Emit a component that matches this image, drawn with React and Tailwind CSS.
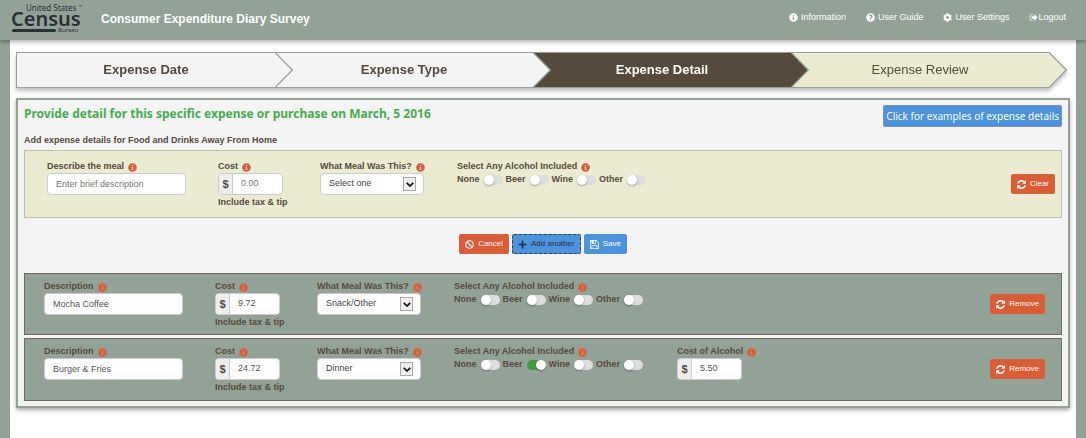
import React, { useState } from 'react'
import { FaInfoCircle, FaQuestionCircle, FaCog, FaBan, FaPlus } from 'react-icons/fa'

const SignOutIcon = ({ className }) => (
  <svg className={className} viewBox="0 0 1664 1792" fill="currentColor" aria-hidden="true">
    <path d="M704 1440q0 4 1 20t.5 26.5-3 23.5-10 19.5-20.5 6.5h-320q-119 0-203.5-84.5t-84.5-203.5v-704q0-119 84.5-203.5t203.5-84.5h320q13 0 22.5 9.5t9.5 22.5q0 4 1 20t.5 26.5-3 23.5-10 19.5-20.5 6.5h-320q-66 0-113 47t-47 113v704q0 66 47 113t113 47h312l11.5 1 11.5 3 8 5.5 7 9 2 13.5zm928-544q0 26-19 45l-544 544q-19 19-45 19t-45-19-19-45v-288h-448q-26 0-45-19t-19-45v-384q0-26 19-45t45-19h448v-288q0-26 19-45t45-19 45 19l544 544q19 19 19 45z" />
  </svg>
)

const RefreshIcon = ({ className }) => (
  <svg className={className} viewBox="0 128 1536 1536" fill="currentColor" aria-hidden="true">
    <path d="M1511 1056q0 5-1 7-64 268-268 434.5t-478 166.5q-146 0-282.5-55t-243.5-157l-129 129q-19 19-45 19t-45-19-19-45v-448q0-26 19-45t45-19h448q26 0 45 19t19 45-19 45l-137 137q71 66 161 102t187 36q134 0 250-65t186-179q11-17 53-117 8-23 30-23h192q13 0 22.5 9.5t9.5 22.5zm25-800v448q0 26-19 45t-45 19h-448q-26 0-45-19t-19-45 19-45l138-138q-148-137-349-137-134 0-250 65t-186 179q-11 17-53 117-8 23-30 23h-199q-13 0-22.5-9.5t-9.5-22.5v-7q65-268 270-434.5t480-166.5q146 0 284 55.5t245 156.5l130-129q19-19 45-19t45 19 19 45z" />
  </svg>
)

const SaveIcon = ({ className }) => (
  <svg className={className} viewBox="128 128 1536 1536" fill="currentColor" aria-hidden="true">
    <path d="M512 1536h768v-384h-768v384zm896 0h128v-896q0-14-10-38.5t-20-34.5l-281-281q-10-10-34-20t-39-10v416q0 40-28 68t-68 28h-576q-40 0-68-28t-28-68v-416h-128v1280h128v-416q0-40 28-68t68-28h832q40 0 68 28t28 68v416zm-384-928v-320q0-13-9.5-22.5t-22.5-9.5h-192q-13 0-22.5 9.5t-9.5 22.5v320q0 13 9.5 22.5t22.5 9.5h192q13 0 22.5-9.5t9.5-22.5zm640 32v928q0 40-28 68t-68 28h-1344q-40 0-68-28t-28-68v-1344q0-40 28-68t68-28h928q40 0 88 20t76 48l280 280q28 28 48 76t20 88z" />
  </svg>
)

const Logo = () => (
  <svg className="h-9 w-20 shrink-0" viewBox="0 0 80 36" fill="#2b3038" role="img" aria-label="United States Census Bureau">
    <text x="16" y="11" fontSize="8" fontFamily="'Noto Sans', sans-serif">United States</text>
    <text x="69" y="8" fontSize="4" fontFamily="'Noto Sans', sans-serif">™</text>
    <text x="1" y="26" fontSize="20" fontWeight="600" fontFamily="'Noto Sans', sans-serif">Census</text>
    <rect x="2" y="29" width="44" height="3" rx="1.5" />
    <text x="48" y="32" fontSize="6" fontFamily="'Noto Sans', sans-serif">Bureau</text>
  </svg>
)

const STEPS = [
  { label: 'Expense Date', box: 'bg-[#f4f4f4] text-[#564a3c] font-bold', fill: '#f4f4f4' },
  { label: 'Expense Type', box: 'bg-[#f4f4f4] text-[#564a3c] font-bold', fill: '#f4f4f4' },
  { label: 'Expense Detail', box: 'bg-[#564a3c] text-white font-bold', fill: '#564a3c', current: true },
  { label: 'Expense Review', box: 'bg-[#ebebd2] text-[#564a3c]', fill: '#ebebd2' },
]

const Steps = () => (
  <nav className="mr-[3px] flex pr-[18px] drop-shadow-[0_3px_2px_rgba(0,0,0,0.25)]">
    {STEPS.map((step, idx) => (
      <button
        key={step.label}
        aria-current={step.current ? 'step' : undefined}
        className={`relative h-9 flex-1 border-y border-[#93a297] text-[13px] ${idx === 0 ? 'border-l' : ''} ${step.box}`}
      >
        {step.label}
        <svg className="absolute -top-px left-full z-10 h-9 w-[18px]" viewBox="0 0 18 36" aria-hidden="true">
          <path d="M0 .5L17.3 18L0 35.5" fill={step.fill} stroke="#93a297" strokeWidth="1.2" />
        </svg>
      </button>
    ))}
  </nav>
)

const Info = () => <FaInfoCircle className="size-[9px] text-[#dc5c36]" />

const Label = ({ htmlFor, children }) => (
  <label htmlFor={htmlFor} className="flex h-3 items-center gap-1 whitespace-nowrap font-bold">
    {children} <Info />
  </label>
)

const MoneyInput = ({ id, value, placeholder }) => (
  <div className="flex h-[22px] w-[65px] overflow-hidden rounded-sm border border-[#ccc] bg-white">
    <span className="flex w-[14px] shrink-0 items-center justify-center border-r border-[#ccc] bg-[#eee] text-[11px] font-bold">$</span>
    <input id={id} defaultValue={value} placeholder={placeholder} className="w-full min-w-0 px-2 text-[9px] text-[#555] outline-none placeholder:text-[#777]" />
  </div>
)

const Toggle = ({ label, checked }) => {
  const [on, setOn] = useState(checked)
  return (
    <label className="flex items-center gap-1">
      {label}
      <input type="checkbox" role="switch" checked={on} onChange={() => setOn(!on)} className="peer sr-only" />
      <span className={`flex h-[10px] w-[19px] rounded-full ${on ? 'justify-end bg-[#43993f]' : 'bg-[#ddd]'}`}>
        <span className="size-[10px] rounded-full bg-white shadow-[0_1px_2px_rgba(0,0,0,0.3)]" />
      </span>
    </label>
  )
}

const SmallButton = ({ className, children }) => (
  <button className={`flex h-5 items-center gap-1 rounded-xs border px-[5px] text-[8px] leading-none ${className}`}>
    {children}
  </button>
)

const ExpenseRow = ({ id, descLabel, desc, cost, meal, beer, alcoholCost, action, className }) => (
  <section className={`flex items-start border text-[9px] ${className}`}>
    <div className="w-[171px] shrink-0">
      <Label htmlFor={`${id}-desc`}>{descLabel}</Label>
      <input
        id={`${id}-desc`}
        defaultValue={desc}
        placeholder="Enter brief description"
        className="h-[22px] w-[139px] rounded-sm border border-[#ccc] bg-white px-2 text-[#555] outline-none placeholder:text-[#777]"
      />
    </div>
    <div className="w-[102px] shrink-0">
      <Label htmlFor={`${id}-cost`}>Cost</Label>
      <MoneyInput id={`${id}-cost`} value={cost} placeholder="0.00" />
      <p className="pt-px font-bold">Include tax &amp; tip</p>
    </div>
    <div className="w-[137px] shrink-0">
      <Label htmlFor={`${id}-meal`}>What Meal Was This?</Label>
      <div className="relative w-[104px]">
        <select
          id={`${id}-meal`}
          defaultValue={meal}
          className="block h-[22px] w-full appearance-none rounded-sm border border-[#ccc] bg-white px-2 text-[#444] outline-none"
        >
          <option>Select one</option>
          <option>Breakfast</option>
          <option>Lunch</option>
          <option>Dinner</option>
          <option>Snack/Other</option>
        </select>
        <span className="pointer-events-none absolute top-1 right-2 flex h-[14px] w-[13px] items-center justify-center border border-[#aaa] bg-[#eee]">
          <svg className="h-[5px] w-2" viewBox="0 0 8 5" aria-hidden="true">
            <path d="M.8.8L4 4L7.2.8" fill="none" stroke="#111" strokeWidth="1.7" />
          </svg>
        </span>
      </div>
    </div>
    <fieldset className="w-[223px] shrink-0 font-bold">
      <legend className="flex h-3 items-center gap-1">Select Any Alcohol Included <Info /></legend>
      <div className="flex h-[14px] items-center gap-[3px]">
        <Toggle label="None" checked={false} />
        <Toggle label="Beer" checked={beer} />
        <Toggle label="Wine" checked={false} />
        <Toggle label="Other" checked={false} />
      </div>
    </fieldset>
    {alcoholCost && (
      <div>
        <Label htmlFor={`${id}-alcohol`}>Cost of Alcohol</Label>
        <MoneyInput id={`${id}-alcohol`} value={alcoholCost} />
      </div>
    )}
    <div className="ml-auto pt-[13px]">
      <SmallButton className="border-[#d9603c] bg-[#dc5c36] text-white">
        <RefreshIcon className="size-[9px]" /> {action}
      </SmallButton>
    </div>
  </section>
)

const App = () => {
  return (
    <div className="min-h-screen bg-[#93a297] font-['Liberation_Sans',Arial,sans-serif] text-[#564a3c]">
      <header className="relative z-20 flex h-10 items-start bg-[#93a297] pr-5 pl-[10px] shadow-[0_2px_4px_rgba(0,0,0,0.3)]">
        <Logo />
        <h1 className="ml-[11px] pt-[11px] text-xs leading-4 font-bold text-white">Consumer Expenditure Diary Survey</h1>
        <nav className="ml-auto flex pt-[11px] text-[9px] leading-3 text-white">
          <a href="#information" className="mr-5 flex items-center gap-[3px]"><FaInfoCircle className="size-[9px]" /> Information</a>
          <a href="#guide" className="mr-5 flex items-center gap-[3px]"><FaQuestionCircle className="size-[9px]" /> User Guide</a>
          <a href="#settings" className="mr-5 flex items-center gap-[3px]"><FaCog className="size-[9px]" /> User Settings</a>
          <a href="#logout" className="flex items-center"><SignOutIcon className="size-[9px]" />Logout</a>
        </nav>
      </header>

      <main className="mx-[10px] min-h-[calc(100vh-40px)] bg-white px-[6px] pt-3 pb-[30px]">
        <Steps />

        <div className="mt-[10px] border-2 border-[#93a297] bg-[#f4f4f4] px-[6px] pb-[5px] shadow-[0_2px_4px_rgba(0,0,0,0.35)]">
          <div className="flex items-start justify-between pt-[5px]">
            <h2 className="font-['Noto_Sans',sans-serif] text-xs leading-[18px] font-bold text-[#46ae50]">
              Provide detail for this specific expense or purchase on March, 5 2016
            </h2>
            <button className="h-[22px] rounded-xs border border-[#7f8fa5] bg-[#4b92df] px-[2px] font-['Noto_Sans',sans-serif] text-[10px] whitespace-nowrap text-white">
              Click for examples of expense details
            </button>
          </div>
          <p className="mt-2 text-[9px] leading-[10px] font-bold">Add expense details for Food and Drinks Away From Home</p>

          <ExpenseRow
            id="new"
            descLabel="Describe the meal"
            meal="Select one"
            beer={false}
            action="Clear"
            className="mt-[5px] h-[68px] border-[#b5c2b2] bg-[#ebebd2] pt-[10px] pr-[6px] pl-[22px]"
          />

          <div className="flex justify-center gap-[3px] py-4">
            <SmallButton className="border-[#d9603c] bg-[#dc5c36] text-white">
              <FaBan className="size-[9px]" /> Cancel
            </SmallButton>
            <SmallButton className="border-dashed border-[#2b3f55] bg-[#4b92df] text-[#2b3038]">
              <FaPlus className="size-[9px]" /> Add another
            </SmallButton>
            <SmallButton className="border-[#4b92df] bg-[#4b92df] text-white">
              <SaveIcon className="size-[9px]" /> Save
            </SmallButton>
          </div>

          <div className="mt-[3px] flex flex-col gap-[3px]">
            <ExpenseRow
              id="mocha"
              descLabel="Description"
              desc="Mocha Coffee"
              cost="9.72"
              meal="Snack/Other"
              beer={false}
              action="Remove"
              className="h-[62px] border-[#6f6a5f] bg-[#93a297] pt-[7px] pr-4 pl-[19px]"
            />
            <ExpenseRow
              id="burger"
              descLabel="Description"
              desc="Burger & Fries"
              cost="24.72"
              meal="Dinner"
              beer={true}
              alcoholCost="5.50"
              action="Remove"
              className="h-[63px] border-[#6f6a5f] bg-[#93a297] pt-[7px] pr-4 pl-[19px]"
            />
          </div>
        </div>
      </main>
    </div>
  )
}

export default App
